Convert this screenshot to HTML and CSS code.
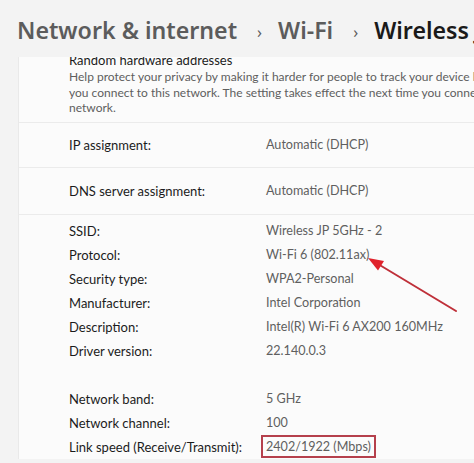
FILE: index.html
```html
<!DOCTYPE html>
<html>
<head>
<meta charset="utf-8">
<link rel="stylesheet" href="styles.css">
</head>
<body>
<div class="page">
  <div class="header">
    <span class="crumb">Network &amp; internet</span><span class="chev">›</span><span class="crumb">Wi-Fi</span><span class="chev">›</span><span class="current">Wireless JP 5GHz - 2</span>
  </div>
  <div class="scroll">
    <div class="card">
      <div class="section intro">
        <div class="title">Random hardware addresses</div>
        <div class="desc">Help protect your privacy by making it harder for people to track your device location when<br>you connect to this network. The setting takes effect the next time you connect to this<br>network.</div>
      </div>
      <div class="section row">
        <span class="label">IP assignment:</span>
        <span class="value">Automatic (DHCP)</span>
      </div>
      <div class="section row dns">
        <span class="label">DNS server assignment:</span>
        <span class="value">Automatic (DHCP)</span>
      </div>
      <div class="section props">
        <div class="grid">
          <span class="label">SSID:</span><span class="value">Wireless JP 5GHz - 2</span>
          <span class="label">Protocol:</span><span class="value">Wi-Fi 6 (802.11ax)</span>
          <span class="label">Security type:</span><span class="value">WPA2-Personal</span>
          <span class="label">Manufacturer:</span><span class="value">Intel Corporation</span>
          <span class="label">Description:</span><span class="value">Intel(R) Wi-Fi 6 AX200 160MHz</span>
          <span class="label">Driver version:</span><span class="value">22.140.0.3</span>
        </div>
        <div class="grid second">
          <span class="label">Network band:</span><span class="value">5 GHz</span>
          <span class="label">Network channel:</span><span class="value">100</span>
          <span class="label">Link speed (Receive/Transmit):</span><span class="value"><span class="boxed">2402/1922 (Mbps)</span></span>
        </div>
      </div>
    </div>
  </div>
  <svg class="arrow" width="474" height="463" viewBox="0 0 474 463">
    <line x1="456" y1="311" x2="378" y2="264" stroke="#bf3039" stroke-width="2" stroke-linecap="round"/>
    <polygon points="368,258 384,261 378,270.5" fill="#e0222b"/>
  </svg>
</div>
</body>
</html>
```

FILE: styles.css
```css
html, body {
  margin: 0;
  padding: 0;
}
body {
  background: #f3f3f3;
  font-family: "Lato", "Noto Sans", sans-serif;
  color: #1b1b1b;
  overflow: hidden;
}
.page {
  position: relative;
  width: 474px;
  height: 463px;
  overflow: hidden;
}
.header {
  height: 57px;
  box-sizing: border-box;
  padding: 12px 0 0 17px;
  font-family: "Noto Sans", sans-serif;
  font-size: 23.2px;
  font-weight: 600;
  white-space: nowrap;
  line-height: 36px;
}
.crumb {
  color: #5c5c5c;
}
.chev {
  display: inline-block;
  color: #5c5c5c;
  font-weight: 400;
  font-size: 16px;
  margin: 0 16px 0 20px;
  position: relative;
  top: -1px;
}
.current {
  color: #1a1a1a;
}
.scroll {
  height: 406px;
  overflow: hidden;
  padding-left: 18px;
}
.card {
  margin-top: -6px;
  background: #fbfbfb;
  border-left: 1px solid #e9e9e9;
  width: 520px;
}
.section {
  padding-left: 50px;
  border-top: 1px solid #ebebeb;
  white-space: nowrap;
}
.intro {
  border-top: none;
  padding-bottom: 6px;
}
.title {
  font-size: 13px;
  line-height: 18px;
  color: #1b1b1b;
}
.desc {
  font-size: 12px;
  line-height: 15.5px;
  color: #5e5e5e;
}
.row {
  display: flex;
  align-items: center;
  height: 44px;
}
.row.dns {
  height: 46px;
}
.label {
  display: inline-block;
  width: 197px;
  font-size: 13px;
  color: #1b1b1b;
}
.value {
  font-size: 12.6px;
  color: #5f5f5f;
}
.props {
  padding-top: 4px;
}
.grid {
  display: grid;
  grid-template-columns: 197px auto;
  grid-auto-rows: 24px;
  align-items: center;
}
.grid.second {
  margin-top: 24px;
}
.boxed {
  display: inline-block;
  border: 2px solid #b5404c;
  padding: 0 3px 0 3px;
  margin-left: -5px;
  line-height: 19px;
}
.arrow {
  position: absolute;
  left: 0;
  top: 0;
  pointer-events: none;
}
```
